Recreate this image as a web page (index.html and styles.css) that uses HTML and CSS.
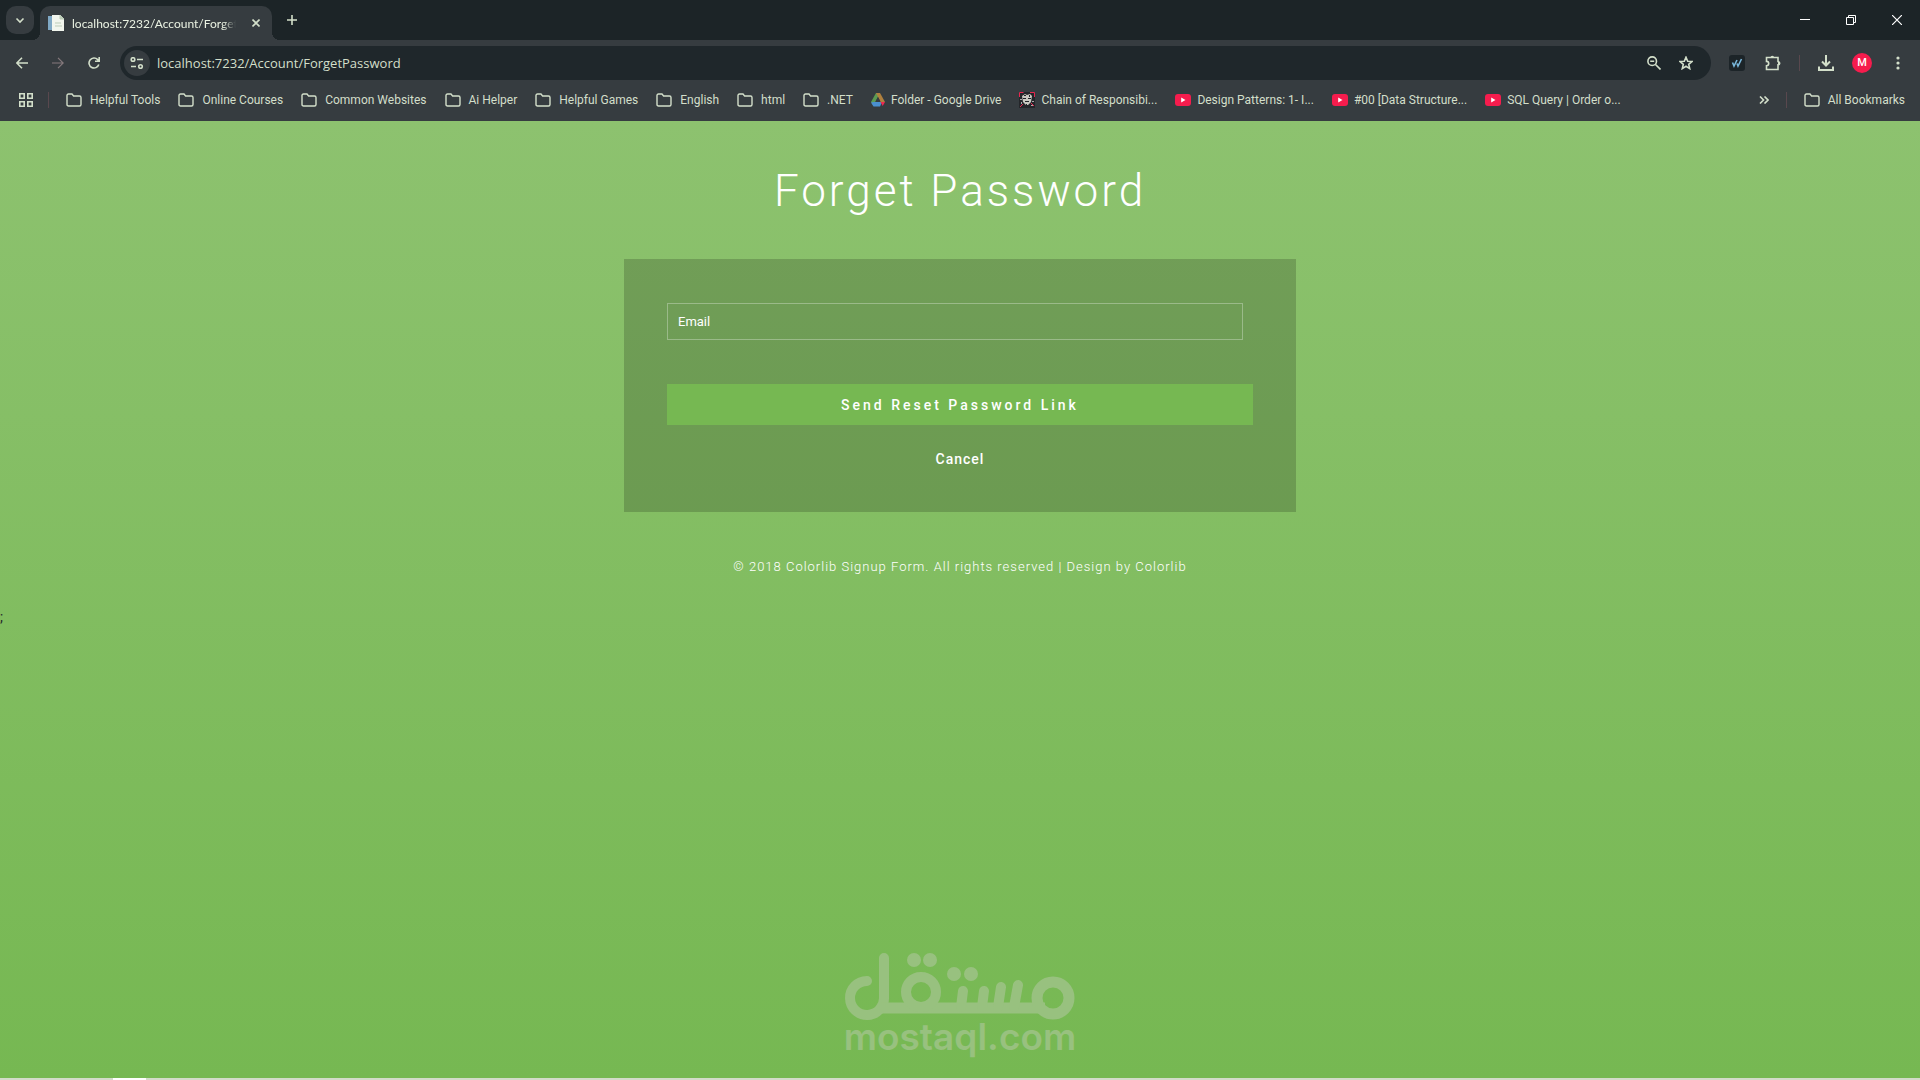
FILE: index.html
```html
<!DOCTYPE html>
<html lang="en">
<head>
<meta charset="utf-8">
<meta name="viewport" content="width=device-width, initial-scale=1">
<title>Forget Password</title>
<link rel="stylesheet" href="styles.css">
</head>
<body>
<svg class="defs" aria-hidden="true">
  <symbol id="folder" viewBox="0 0 16 14"><path d="M1 2.500Q1 1 2.500 1H6l1.600 2H13.500Q15 3 15 4.500V11.500Q15 13 13.500 13H2.500Q1 13 1 11.500Z" fill="none" stroke="currentColor" stroke-width="1.400"/></symbol>
  <symbol id="youtube" viewBox="0 0 16 12"><rect width="16" height="12" rx="3" fill="#f61c4d"/><path d="M6.200 3.500v5l4.300-2.500z" fill="#fff"/></symbol>
</svg>

<header class="browser">
  <div class="tabstrip">
    <button class="tab-search" aria-label="Search tabs"><svg width="10" height="10" viewBox="0 0 10 10"><path d="M1.500 3.500 5 7l3.500-3.500" class="line thick"/></svg></button>
    <div class="tab">
      <svg width="16" height="16" viewBox="0 0 16 16"><path d="M0 1h5v14H0z" fill="#7fa8c4"/><path d="M4 0h8l4 4v12H4z" fill="#f2f6ee"/><path d="M12 0v4h4zM7 8h6M7 11h7" fill="#bccdb9" stroke="#bccdb9"/></svg>
      <span class="tab-title">localhost:7232/Account/ForgetPassword</span>
      <button class="icon-btn tab-close" aria-label="Close tab"><svg width="8" height="8" viewBox="0 0 8 8"><path d="M.500.500l7 7M7.500.500l-7 7" class="line thick"/></svg></button>
    </div>
    <button class="icon-btn new-tab" aria-label="New tab"><svg width="10" height="10" viewBox="0 0 10 10"><path d="M5 0v10M0 5h10" class="line thick"/></svg></button>
    <div class="window-controls">
      <button class="icon-btn" aria-label="Minimize"><svg width="10" height="10" viewBox="0 0 10 10"><path d="M0 4.500h10" stroke="#fff"/></svg></button>
      <button class="icon-btn" aria-label="Restore"><svg width="10" height="10" viewBox="0 0 10 10"><path d="M.500 2.500h7v7h-7zM2.500 2.500v-2h7v7h-2" fill="none" stroke="#fff"/></svg></button>
      <button class="icon-btn" aria-label="Close"><svg width="10" height="10" viewBox="0 0 10 10"><path d="M0 0l10 10M10 0L0 10" stroke="#fff" stroke-width="1.200"/></svg></button>
    </div>
  </div>

  <div class="toolbar">
    <button class="icon-btn" aria-label="Back"><svg width="12" height="12" viewBox="0 0 12 12"><path d="M12 6H1M6 .800.800 6 6 11.200" class="line thick"/></svg></button>
    <button class="icon-btn dim" aria-label="Forward"><svg width="12" height="12" viewBox="0 0 12 12"><path d="M0 6h11M6 .800 11.200 6 6 11.200" class="line"/></svg></button>
    <button class="icon-btn" aria-label="Reload"><svg width="12" height="12" viewBox="0 0 12 12"><path d="M10.800 7.500A5 5 0 1 1 9.700 2.600L11 4M11.200 0v4.300H7" class="line thick"/></svg></button>
    <div class="omnibox">
      <button class="site-info" aria-label="Site information"><svg width="14" height="12" viewBox="0 0 14 12"><circle cx="3" cy="2.500" r="1.800" class="line thick"/><path d="M7 2.500h6M1 9.500h5" class="line thick"/><circle cx="10.500" cy="9.500" r="1.800" class="line thick"/></svg></button>
      <input class="address" type="text" aria-label="Address" value="localhost:7232/Account/ForgetPassword">
      <button class="icon-btn" aria-label="Zoom"><svg width="14" height="14" viewBox="0 0 14 14"><circle cx="5.200" cy="5.200" r="4.300" class="line thick"/><path d="M8.500 8.500l5 5M3.200 5.200h4" class="line thick"/></svg></button>
      <button class="icon-btn" aria-label="Bookmark this tab"><svg width="14" height="14" viewBox="0 0 14 14"><path d="M7 1.200 8.700 5.200 13 5.500 9.700 8.300 10.700 12.600 7 10.300 3.300 12.600 4.300 8.300 1 5.500 5.300 5.200Z" class="line thick"/></svg></button>
    </div>
    <div class="actions">
      <button class="icon-btn" aria-label="Extension"><svg width="16" height="16" viewBox="0 0 16 16"><rect width="16" height="16" rx="3" fill="#1c2428"/><path d="M3.500 7.500l1.500 3.500L8 5M8 8.500l1 2.500L12.500 4" fill="none" stroke="#79b8dc" stroke-width="1.600"/></svg></button>
      <button class="icon-btn" aria-label="Extensions"><svg width="16" height="16" viewBox="0 0 16 16"><path d="M1.500 2.500H13V6.500a1.700 1.700 0 0 1 0 3.400V14.500H1.500v-3.700a2.200 2.200 0 0 0 0-4.400z" class="line thick"/><path d="M5.500 2.500a1.800 1.800 0 0 1 3.600 0zM13 6.500a1.700 1.700 0 0 1 0 3.400z" fill="currentColor"/></svg></button>
      <span class="divider"></span>
      <button class="icon-btn" aria-label="Downloads"><svg width="16" height="16" viewBox="0 0 16 16"><path d="M8 0v10M4 6.500l4 4 4-4M1 11.500V15h14v-3.500" fill="none" stroke="currentColor" stroke-width="2"/></svg></button>
      <button class="profile" aria-label="Profile">M</button>
      <button class="icon-btn" aria-label="Menu"><svg width="4" height="14" viewBox="0 0 4 14"><g fill="currentColor"><circle cx="2" cy="2" r="1.600"/><circle cx="2" cy="7" r="1.600"/><circle cx="2" cy="12" r="1.600"/></g></svg></button>
    </div>
  </div>

  <nav class="bookmarks" aria-label="Bookmarks">
    <button class="icon-btn" aria-label="Apps"><svg width="14" height="14" viewBox="0 0 14 14"><path d="M.800.800h4.400v4.400H.800zM8.800.800h4.400v4.400H8.800zM.800 8.800h4.400v4.400H.800zM8.800 8.800h4.400v4.400H8.800z" class="line thick"/></svg></button>
    <span class="divider"></span>
    <div class="bookmark-list">
      <a href="#"><svg class="folder"><use href="#folder"/></svg>Helpful Tools</a>
      <a href="#"><svg class="folder"><use href="#folder"/></svg>Online Courses</a>
      <a href="#"><svg class="folder"><use href="#folder"/></svg>Common Websites</a>
      <a href="#"><svg class="folder"><use href="#folder"/></svg>Ai Helper</a>
      <a href="#"><svg class="folder"><use href="#folder"/></svg>Helpful Games</a>
      <a href="#"><svg class="folder"><use href="#folder"/></svg>English</a>
      <a href="#"><svg class="folder"><use href="#folder"/></svg>html</a>
      <a href="#"><svg class="folder"><use href="#folder"/></svg>.NET</a>
      <a href="#" class="site"><svg width="14" height="14" viewBox="0 0 14 14"><path d="M5 0h4L4.500 8.500 2.200 12.500 0 9z" fill="#5b9b52"/><path d="M5 0h4l5 9h-4.500z" fill="#b0803e"/><path d="M2.500 9H11l-2 4.500H2.500L0 9.500z" fill="#4a8fd0"/><path d="M9.500 9H14l-2.300 4z" fill="#ee2850"/><path d="M7 4l2.500 4.500h-5z" fill="#363c40"/></svg>Folder - Google Drive</a>
      <a href="#" class="site"><svg width="16" height="16" viewBox="0 0 16 16"><path d="M0 0h16v16H0z" fill="#24262a"/><path d="M.500 5V.500h4M11 .500h4.500V5M1 15l3-3M15 14l-3-3" fill="none" stroke="#e82850"/><path d="M3 4l3-2 2 1 3-1 2 2-1 6-3 3H7l-3-3z" fill="#c9c8c0"/><path d="M4 6h3v1H4zM9 6h3v1H9zM6 9h4v1H6zM5 3h2v1H5zM10 3h1v2h-1zM7 12h1v2H7z" fill="#22252a"/><path d="M1 7h2v1H1zM13 9h2v1h-2zM2 10h1v2H2zM12 13h2v1h-2z" fill="#aaa"/></svg>Chain of Responsibi...</a>
      <a href="#" class="site"><svg class="youtube"><use href="#youtube"/></svg>Design Patterns: 1- I...</a>
      <a href="#" class="site"><svg class="youtube"><use href="#youtube"/></svg>#00 [Data Structure...</a>
      <a href="#" class="site"><svg class="youtube"><use href="#youtube"/></svg>SQL Query | Order o...</a>
    </div>
    <button class="icon-btn more" aria-label="More bookmarks"><svg width="10" height="8" viewBox="0 0 10 8"><path d="M1 .500 4.500 4 1 7.500M5.500.500 9 4 5.500 7.500" class="line thick"/></svg></button>
    <span class="divider"></span>
    <a href="#"><svg class="folder"><use href="#folder"/></svg>All Bookmarks</a>
  </nav>
</header>

<main class="page">
  <h1>Forget Password</h1>
  <form class="panel">
    <input class="email" type="email" placeholder="Email" aria-label="Email">
    <button class="submit" type="button">Send Reset Password Link</button>
    <a class="cancel" href="#">Cancel</a>
  </form>
  <p class="copyright">© 2018 Colorlib Signup Form. All rights reserved | Design by <a href="#">Colorlib</a></p>
  <span class="stray">;</span>

  <svg class="watermark" viewBox="0 0 230 110" role="img" aria-label="mostaql.com">
    <g fill="none" stroke="#98c17f" stroke-width="10" stroke-linecap="round">
      <path d="M39 7V46A17 17 0 1 1 22 30" />
      <path d="M36 57H200" stroke-linecap="butt" stroke-width="11"/>
      <circle cx="76" cy="41" r="15"/>
      <path d="M118 40l-2 16M139 40l-2 16M156 36l-3 20M173 34l-4 22"/>
      <circle cx="208" cy="47" r="16" stroke-width="11"/>
    </g>
    <g fill="#98c17f">
      <circle cx="69" cy="9" r="7"/><circle cx="85" cy="9" r="7"/><circle cx="109" cy="23" r="7"/><circle cx="126" cy="23" r="7"/>
      <text x="115" y="99" text-anchor="middle" class="watermark-text">mostaql.com</text>
    </g>
  </svg>
</main>
<div class="taskbar"><span></span></div>
</body>
</html>
```

FILE: styles.css
```css
* { box-sizing: border-box; }

body {
  margin: 0;
  min-height: 100vh;
  display: flex;
  flex-direction: column;
  font-family: Roboto, sans-serif;
}

button, input { font: inherit; color: inherit; border: 0; padding: 0; background: none; }
a { color: inherit; text-decoration: none; }
svg { flex: none; display: block; }

.defs { position: absolute; width: 0; height: 0; }
.line { fill: none; stroke: currentColor; stroke-width: 1.2; }
.thick { stroke-width: 1.6; }

/* Browser frame */
.browser {
  background: #363c40;
  color: #d3dfca;
  font-size: 12px;
}

.icon-btn { width: 28px; height: 28px; display: grid; place-items: center; flex: none; }

.tabstrip { height: 40px; display: flex; align-items: center; background: #1c2427; padding-left: 6px; }
.tab-search { width: 28px; height: 28px; border-radius: 10px; background: #363c40; display: grid; place-items: center; }

.tab {
  position: relative;
  width: 232px;
  height: 34px;
  margin-left: 6px;
  padding: 0 4px 0 8px;
  display: flex;
  align-items: center;
  align-self: flex-end;
  gap: 8px;
  background: #363c40;
  border-radius: 10px 10px 0 0;
}
/* Curved feet where the tab meets the toolbar */
.tab::before, .tab::after { content: ""; position: absolute; bottom: 0; width: 8px; height: 8px; }
.tab::before { left: -8px; background: radial-gradient(circle at 0 0, transparent 8px, #363c40 8px); }
.tab::after { right: -8px; background: radial-gradient(circle at 100% 0, transparent 8px, #363c40 8px); }
.tab-title {
  flex: 1;
  overflow: hidden;
  white-space: nowrap;
  color: #eaf2e2;
  font-family: Lato, sans-serif;
  -webkit-mask-image: linear-gradient(to right, #000 92%, transparent);
  mask-image: linear-gradient(to right, #000 92%, transparent);
}
.tab-close { width: 24px; }
.new-tab { margin-left: 6px; }
.window-controls { margin-left: auto; display: flex; }
.window-controls .icon-btn { width: 46px; }

.toolbar { height: 46px; padding: 0 8px; display: flex; align-items: center; gap: 8px; }
.dim { color: #85797c; }
.omnibox {
  flex: 1;
  height: 34px;
  margin-left: 4px;
  padding: 0 11px 0 4px;
  display: flex;
  align-items: center;
  gap: 4px;
  border-radius: 17px;
  background: #1f272b;
}
.site-info { width: 26px; height: 26px; border-radius: 50%; background: #363c40; display: grid; place-items: center; }
.address { flex: 1; min-width: 0; margin-left: 3px; font: 13px "Open Sans", sans-serif; outline: 0; }
.actions { display: flex; align-items: center; gap: 8px; margin-left: 4px; }
.divider { width: 1px; height: 16px; background: #59484e; flex: none; }
.actions .divider { margin: 0 4px; }
.profile { width: 20px; height: 20px; border-radius: 50%; background: #f61c4d; color: #fff; font: 500 11px/20px Roboto, sans-serif; margin: 0 4px; }

.bookmarks { height: 35px; padding: 0 15px 7px 12px; display: flex; align-items: center; }
.bookmarks .divider { margin: 0 17px 0 8px; }
.bookmark-list { flex: 1; min-width: 0; display: flex; gap: 18px; }
.bookmarks a { display: flex; align-items: center; gap: 8px; white-space: nowrap; line-height: 16px; }
.bookmarks .site { gap: 6px; }
.folder { width: 16px; height: 14px; }
.youtube { width: 16px; height: 12px; }

/* Password form */
.page {
  flex: 1;
  position: relative;
  display: flex;
  flex-direction: column;
  align-items: center;
  padding-top: 41px;
  background: linear-gradient(to bottom, #8dc26f, #76b852);
  color: #fff;
}

h1 { margin: 0 0 39px; font-size: 44px; line-height: 58px; font-weight: 300; letter-spacing: 3px; }

.panel {
  width: 35%;
  min-width: 320px;
  padding: 44px 43px 43px;
  display: flex;
  flex-direction: column;
  background: rgba(0, 0, 0, 0.18);
}
.email {
  height: 37px;
  margin-right: 10px;
  padding: 0 10px;
  border: 1px solid rgba(255, 255, 255, 0.3);
  font-size: 13px;
}
.email::placeholder { color: #fff; opacity: 1; }
.submit { height: 41px; margin-top: 44px; background: #76b852; font-size: 14px; font-weight: 500; letter-spacing: 3px; }
.cancel { margin-top: 24px; line-height: 20px; align-self: center; font-size: 14px; font-weight: 500; letter-spacing: 1px; }

.copyright { margin: 45px 0 0; font-size: 13px; font-weight: 300; line-height: 20px; letter-spacing: 1px; }
.stray { align-self: flex-start; margin-top: 32px; font-size: 14px; line-height: 16px; color: #212529; }

.watermark { position: absolute; left: 50%; bottom: 17px; width: 230px; height: 110px; overflow: visible; transform: translateX(-50%); }
.watermark-text { font: 600 37px Inter, sans-serif; }

.taskbar { height: 2px; background: #d3dbca; padding-left: 113px; }
.taskbar span { display: block; width: 33px; height: 2px; background: #fff; }
```
